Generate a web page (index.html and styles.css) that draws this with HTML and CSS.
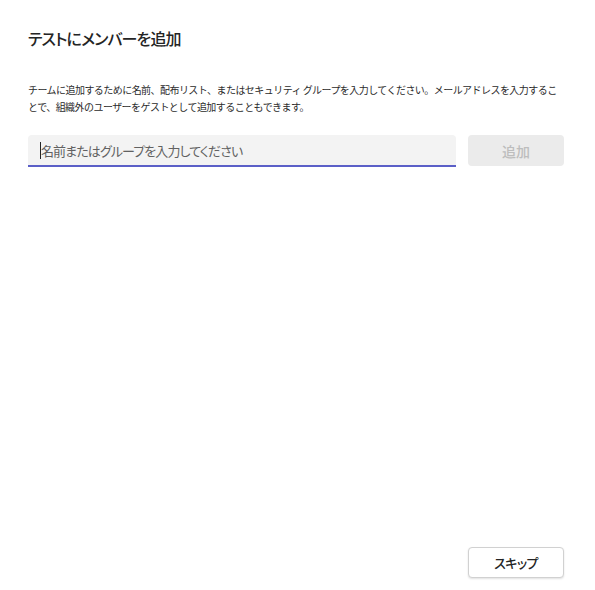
FILE: index.html
```html
<!DOCTYPE html>
<html lang="ja">
<head>
<meta charset="utf-8">
<link rel="stylesheet" href="styles.css">
</head>
<body>
<div class="dialog">
  <h1 class="title">テストにメンバーを追加</h1>
  <p class="desc">チームに追加するために名前、配布リスト、またはセキュリティ グループを入力してください。メールアドレスを入力することで、組織外のユーザーをゲストとして追加することもできます。</p>
  <div class="row">
    <div class="field"><span class="caret"></span><span class="ph">名前またはグループを入力してください</span></div>
    <button class="btn-add">追加</button>
  </div>
  <div class="spacer"></div>
  <div class="footer">
    <button class="btn-skip">スキップ</button>
  </div>
</div>
</body>
</html>
```
FILE: styles.css
```css
html, body { margin: 0; padding: 0; background: #fff; }
body {
  font-family: "Noto Sans CJK JP", "Noto Sans", sans-serif;
  color: #242424;
  width: 595px;
  height: 590px;
  overflow: hidden;
}
.dialog {
  box-sizing: border-box;
  height: 590px;
  padding: 26px 31px 12px 28px;
  display: flex;
  flex-direction: column;
}
.title {
  margin: 0;
  font-size: 16px;
  font-weight: 500;
  line-height: 24px;
  letter-spacing: -0.9px;
  font-feature-settings: "palt";
}
.desc {
  margin: 31px 0 0 0;
  font-size: 10px;
  line-height: 17px;
  letter-spacing: -0.55px;
  color: #2b2b2b;
  width: 536px;
}
.row {
  margin-top: 20px;
  display: flex;
  gap: 12px;
}
.field {
  box-sizing: border-box;
  width: 428px;
  height: 32px;
  background: #f3f3f3;
  border-radius: 4px 4px 0 0;
  border-bottom: 2px solid #5b5fc7;
  display: flex;
  align-items: center;
  padding-left: 12px;
}
.caret {
  width: 1px;
  height: 17px;
  background: #242424;
}
.ph {
  font-size: 13px;
  letter-spacing: -0.9px;
  color: #616161;
  font-feature-settings: "palt";
}
.btn-add {
  width: 96px;
  height: 31px;
  border: none;
  border-radius: 4px;
  background: #ebebeb;
  color: #bdbdbd;
  font-family: inherit;
  font-size: 14px;
  font-weight: 500;
  padding: 0;
}
.spacer { flex: 1; }
.footer {
  display: flex;
  justify-content: flex-end;
}
.btn-skip {
  width: 96px;
  height: 31px;
  background: #fff;
  border: 1px solid #d1d1d1;
  border-radius: 4px;
  box-shadow: 0 1px 2px rgba(0,0,0,0.12);
  font-family: inherit;
  font-size: 13px;
  font-weight: 500;
  letter-spacing: -0.6px;
  color: #242424;
  padding: 0;
  font-feature-settings: "palt";
}
```
